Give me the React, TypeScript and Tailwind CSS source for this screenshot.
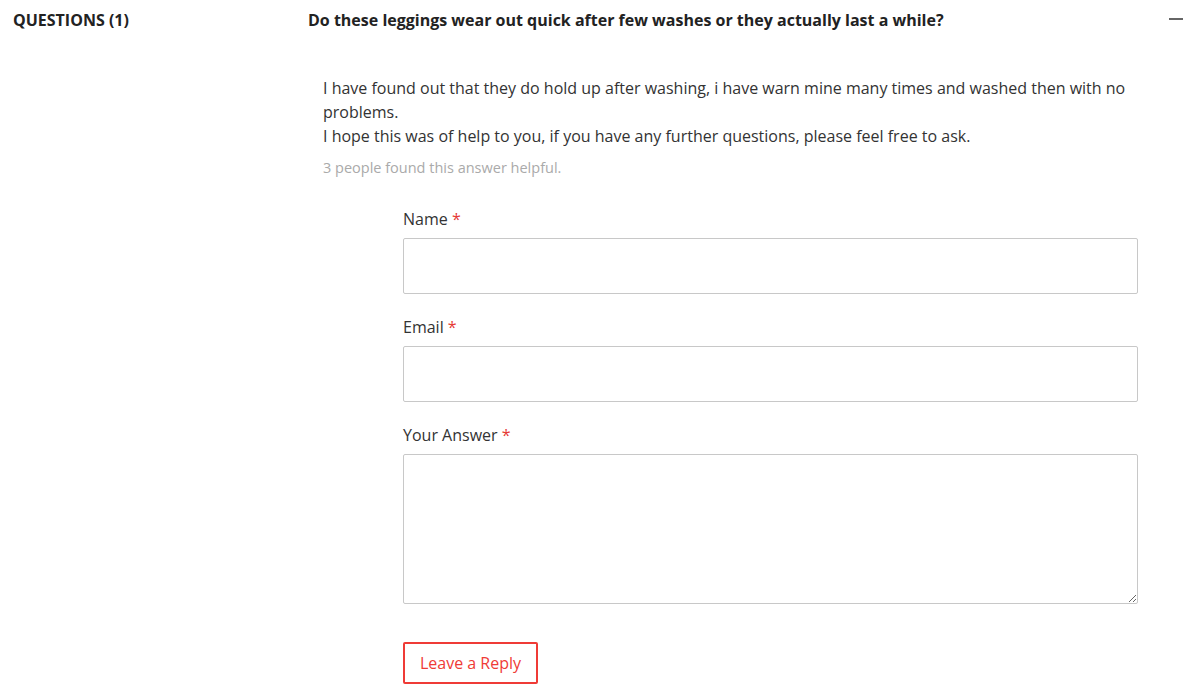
const font = { fontFamily: '"Open Sans", sans-serif' };

const Field = ({ label, tall }: { label: string; tall?: boolean }) => (
  <div className="flex flex-col">
    <label className="text-[16px] leading-[24px] text-[#333]">
      {label} <span className="text-[#e53935]">*</span>
    </label>
    {tall ? (
      <textarea className="mt-[7px] h-[150px] w-full border border-[#c8c8c8] rounded-[2px] outline-none resize-y" />
    ) : (
      <input className="mt-[7px] h-[56px] w-full border border-[#c8c8c8] rounded-[2px] outline-none" />
    )}
  </div>
);

export default function App() {
  return (
    <div className="w-[1196px] h-[694px] bg-white overflow-hidden text-[#333]" style={font}>
      <div className="flex pt-[8px]">
        <div className="w-[308px] pl-[13px] font-bold text-[16px] leading-[24px] text-[#222]">
          QUESTIONS (1)
        </div>
        <div className="flex-1 pr-[13px]">
          <div className="flex items-start justify-between">
            <h3 className="font-bold text-[16px] leading-[24px] text-[#222]">
              Do these leggings wear out quick after few washes or they actually last a while?
            </h3>
            <span className="mt-[10px] block w-[14px] h-[2px] bg-[#666]" />
          </div>
          <div className="pl-[15px] pr-[30px] mt-[44px]">
            <p className="text-[16px] leading-[24px]">
              I have found out that they do hold up after washing, i have warn mine many times and washed then with no problems.
              <br />
              I hope this was of help to you, if you have any further questions, please feel free to ask.
            </p>
            <p className="mt-[10px] text-[14.5px] leading-[20px] text-[#aaa]">3 people found this answer helpful.</p>
          </div>
          <div className="pl-[95px] pr-[45px] mt-[29px] flex flex-col gap-[21px]">
            <Field label="Name" />
            <Field label="Email" />
            <Field label="Your Answer" tall />
            <div className="mt-[17px]">
              <button className="h-[42px] w-[135px] border-2 border-[#ef3b36] rounded-[2px] text-[#ef3b36] text-[16px]">
                Leave a Reply
              </button>
            </div>
          </div>
        </div>
      </div>
    </div>
  );
}
